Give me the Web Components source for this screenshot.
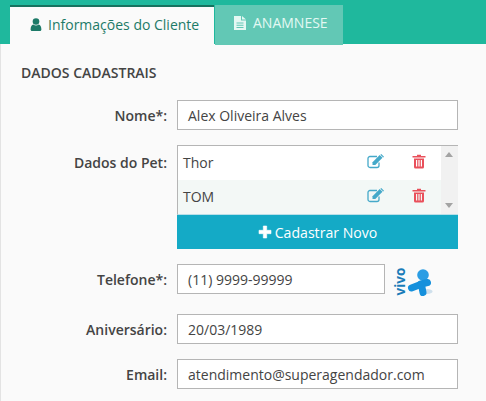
<!DOCTYPE html>
<html><head><meta charset="utf-8"><style>
html,body{margin:0;padding:0;height:401px;overflow:hidden;background:#fafafa}
body{font-family:"Open Sans",sans-serif;color:#333}
</style></head><body>
<template id="t-app"><style>
:host{display:block;width:486px;height:401px;overflow:hidden}
.top{display:flex;height:39px;padding:5px 0 0 10px;background:#1fb89d;box-sizing:content-box}
.panel{background:#fafafa;border-left:1px solid #e3e3e3;height:357px;padding:20px 0 0 20px;box-sizing:border-box}
h2{margin:0 0 18px;font:600 14px/18px "Open Sans",sans-serif;color:#444;height:18px}
.form{display:flex;flex-direction:column}
</style>
<div class="top"><slot name="tabs"></slot></div>
<div class="panel"><h2>DADOS CADASTRAIS</h2><div class="form"><slot></slot></div></div>
</template>

<template id="t-tab"><style>
:host{display:flex;align-items:center;box-sizing:border-box;height:40px;gap:6px;font-size:14px;white-space:nowrap;flex:none}
:host([active]){width:204px;height:39px;background:#fafafa;border-top:2px solid #16725f;color:#1d7a68;padding:0 0 3px 20px}
:host(:not([active])){width:128px;margin-left:1px;gap:7px;background:#62c8b5;color:#e4f8f3;padding:0 0 5px 19px}
svg{display:block;flex:none}
</style><slot name="icon"></slot><slot></slot></template>

<template id="t-row"><style>
:host{display:grid;grid-template-columns:146px 1fr;column-gap:10px;margin-bottom:var(--mb,20px);align-items:start}
label{font:600 14px/20px "Open Sans",sans-serif;color:#444;text-align:right;padding-top:var(--lt,6px);white-space:nowrap}
.c{display:flex;align-items:flex-start;min-width:0}
</style><label><slot name="label"></slot></label><div class="c"><slot></slot></div></template>

<template id="t-input"><style>
:host{display:flex;align-items:center;box-sizing:border-box;height:30px;width:281px;background:#fff;border:1px solid #b5b5b5;padding:0 10px;font-size:14px;color:#444;white-space:nowrap}
</style><slot></slot></template>

<template id="t-pets"><style>
:host{display:block;width:281px}
.box{display:flex;box-sizing:border-box;height:70px;border:1px solid #b5b5b5;border-width:1px 0 0 1px;background:#fff;border-bottom:1px solid #b9dfe8}
.list{flex:1;min-width:0;display:flex;flex-direction:column}
.bar{width:17px;background:#f1f1f1;position:relative;flex:none;box-sizing:border-box}
.bar i{position:absolute;left:4px;width:0;height:0;border-left:4px solid transparent;border-right:4px solid transparent}
.bar i.u{top:6px;border-bottom:5px solid #a3a3a3}
.bar i.d{bottom:6px;border-top:5px solid #a3a3a3}
button{display:flex;align-items:center;justify-content:center;gap:3px;width:100%;height:34px;border:0;background:#14aac6;color:#fff;font:400 14.1px "Open Sans",sans-serif;padding:0}
</style><div class="box"><div class="list"><slot></slot></div><div class="bar"><i class="u"></i><i class="d"></i></div></div>
<button><svg width="14" height="14" viewBox="0 0 14 14"><path d="M5.300 1h3.400v4.300H13v3.400H8.700V13H5.300V8.700H1V5.300h4.300z" fill="#fff" stroke="#fff" stroke-width=".6" stroke-linejoin="round"/></svg><slot name="btn"></slot></button></template>

<template id="t-pet"><style>
:host{display:grid;grid-template-columns:1fr 24px 24px;column-gap:20px;align-items:center;height:34px;padding:0 10px 0 5px;font-size:14px;color:#444}
:host([alt]){background:#f3f8f6;height:35px}
svg{display:block;justify-self:center;position:relative;top:-1px}
</style><span><slot></slot></span>
<svg width="17" height="15" viewBox="0 0 17 15"><path d="M12 8.500v3A2 2 0 0 1 10 13.500H3A2 2 0 0 1 1 11.500V4.500A2 2 0 0 1 3 2.500H10" fill="none" stroke="#45a9c9" stroke-width="1.300"/><path d="M5.500 8.200L12.700 1 15.500 3.800 8.300 11H5.500z" fill="#45a9c9"/><path d="M13.800.4l2.800 2.800" stroke="#45a9c9" stroke-width="1.200"/></svg>
<svg width="14" height="15" viewBox="0 0 14 15"><path d="M5 2V.8h4V2h4.500v1.600H.5V2z" fill="#e9505b"/><path fill-rule="evenodd" d="M2 4.500h10V13a1.500 1.500 0 0 1-1.500 1.500h-7A1.500 1.500 0 0 1 2 13zM4 6v6.500h1.200V6zM6.400 6v6.500h1.200V6zM8.800 6v6.500H10V6z" fill="#e9505b"/></svg></template>

<script>
const def=(n,id)=>customElements.define(n,class extends HTMLElement{constructor(){super();this.attachShadow({mode:"open"}).appendChild(document.getElementById(id).content.cloneNode(true))}});
def("sa-app","t-app");def("sa-tab","t-tab");def("sa-row","t-row");def("sa-input","t-input");def("sa-pets","t-pets");def("sa-pet","t-pet");
</script>
<sa-app>
<sa-tab slot="tabs" active><svg slot="icon" width="12" height="13" viewBox="0 0 12 13"><circle cx="6" cy="3.500" r="3.300" fill="#1d7a68"/><path d="M.6 11.500C.6 8.500 1.800 6.800 3.300 6.400 4.800 7.700 7.200 7.700 8.700 6.400 10.200 6.800 11.400 8.500 11.400 11.500 11.400 12.400 10.800 13 10 13H2C1.200 13 .6 12.400 .6 11.500z" fill="#1d7a68"/></svg>Informações do Cliente</sa-tab>
<sa-tab slot="tabs"><svg slot="icon" width="12" height="14" viewBox="0 0 12 14"><path fill-rule="evenodd" d="M0 0H7V4.500H12V14H0zM2.500 6.500v1h7v-1zM2.500 8.700v1h7v-1zM2.500 10.900v1h7v-1z" fill="#e4f8f3"/><path d="M8 0l4 3.500H8z" fill="#e4f8f3"/></svg>ANAMNESE</sa-tab>
<sa-row style="--mb:15px"><span slot="label">Nome*:</span><sa-input>Alex Oliveira Alves</sa-input></sa-row>
<sa-row style="--mb:15px;--lt:8px"><span slot="label">Dados do Pet:</span><sa-pets><sa-pet>Thor</sa-pet><sa-pet alt>TOM</sa-pet><span slot="btn">Cadastrar Novo</span></sa-pets></sa-row>
<sa-row><span slot="label">Telefone*:</span><sa-input style="width:208px;flex:none">(11) 9999-99999</sa-input>
<svg width="44" height="36" viewBox="-4 0 44 36" style="margin:0 0 -6px 5px;flex:none"><ellipse cx="33" cy="27.500" rx="5.500" ry="2.500" fill="#cfe0ec"/><circle cx="29" cy="11" r="5.800" fill="#2a9de4"/><g fill="none" stroke="#1590dc" stroke-width="7" stroke-linecap="round"><path d="M26.500 20.500L17.500 24"/><path d="M27 20L33.500 18.500"/><path d="M27.500 21L29 28.500"/></g><text x="0" y="0" transform="translate(10.500 31.500) rotate(-90)" font-family="Open Sans" font-weight="700" font-size="13.500" fill="#1a7cb8">vivo</text></svg></sa-row>
<sa-row style="--mb:15px"><span slot="label">Aniversário:</span><sa-input>20/03/1989</sa-input></sa-row>
<sa-row><span slot="label">Email:</span><sa-input>atendimento@superagendador.com</sa-input></sa-row>
</sa-app>
</body></html>
